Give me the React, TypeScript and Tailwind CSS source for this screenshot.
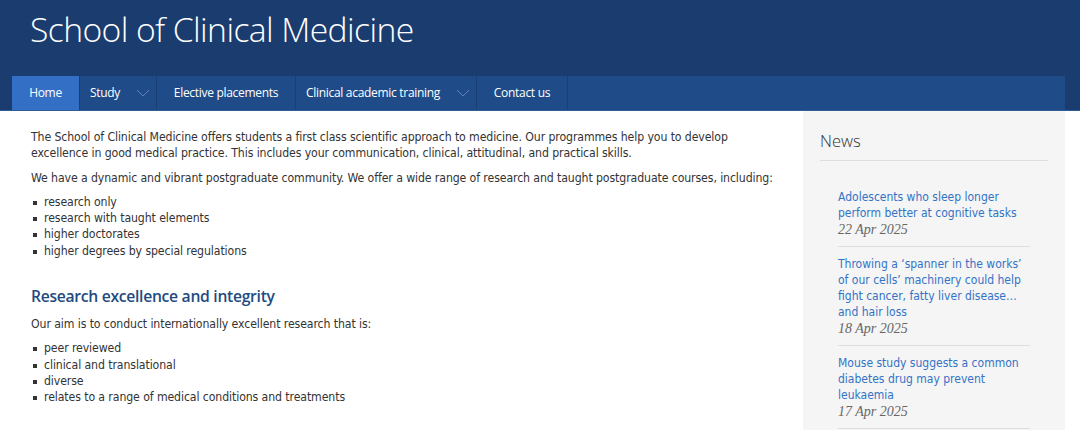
const navItems = [
  { label: "Home", active: true, w: "w-[68px]" },
  { label: "Study", dropdown: true, w: "w-[77px]" },
  { label: "Elective placements", w: "w-[139px]" },
  { label: "Clinical academic training", dropdown: true, w: "w-[181px]" },
  { label: "Contact us", w: "w-[91px]" },
];

const news = [
  { title: "Adolescents who sleep longer perform better at cognitive tasks", date: "22 Apr 2025" },
  {
    title: "Throwing a \u2018spanner in the works\u2019 of our cells\u2019 machinery could help fight cancer, fatty liver disease\u2026 and hair loss",
    date: "18 Apr 2025",
  },
  { title: "Mouse study suggests a common diabetes drug may prevent leukaemia", date: "17 Apr 2025" },
];

const Chevron = () => (
  <svg width="14" height="8" viewBox="0 0 14 8" fill="none" className="shrink-0">
    <polyline points="1,1 7,7 13,1" stroke="#5f82b6" strokeWidth="1" />
  </svg>
);

const Bullets = ({ items }: { items: string[] }) => (
  <ul className="mb-[16px]">
    {items.map((item) => (
      <li key={item} className="flex items-start">
        <span className="mt-[7px] ml-[2px] mr-[7px] h-[4px] w-[4px] shrink-0 bg-[#333]" />
        <span>{item}</span>
      </li>
    ))}
  </ul>
);

export default function App() {
  return (
    <div className="min-h-[430px] bg-white">
      {/* HEADER */}
      <header className="bg-[#1a3c6e] border-b border-[#2e5d94]">
        <div className="pl-[12px] w-[1065px]">
          <h1 className="h-[76px] pl-[18px] pt-[5px] font-['Open_Sans',sans-serif] text-[33.7px] font-light leading-[48px] tracking-[-0.6px] text-white">
            School of Clinical Medicine
          </h1>
          <nav className="flex h-[34px] bg-[#1f4c88]">
            {navItems.map((item) => (
              <div
                key={item.label}
                className={`${item.w} flex items-center border-r border-[#1a3f72] font-['Open_Sans',sans-serif] text-[12px] font-medium tracking-[-0.3px] text-white ${
                  item.active ? "justify-center bg-[#3370c5]" : item.dropdown ? "justify-between pl-[10px] pr-[6px]" : "justify-center"
                }`}
              >
                <span>{item.label}</span>
                {item.dropdown && <Chevron />}
              </div>
            ))}
          </nav>
        </div>
      </header>

      {/* CONTENT */}
      <div className="flex w-[1065px] pl-[12px]">
        <main className="w-[791px] pl-[19px] pr-[23px] pt-[18px] font-['DejaVu_Sans_Condensed','DejaVu_Sans',Verdana,sans-serif] [font-stretch:semi-condensed] text-[12.2px] tracking-[-0.1px] leading-[16.3px] text-[#333]">
          <p className="mb-[8px]">
            The School of Clinical Medicine offers students a first class scientific approach to medicine. Our programmes help you to develop excellence in good medical practice. This includes your communication, clinical, attitudinal, and practical skills.
          </p>
          <p className="mb-[8px]">
            We have a dynamic and vibrant postgraduate community. We offer a wide range of research and taught postgraduate courses, including:
          </p>
          <Bullets items={["research only", "research with taught elements", "higher doctorates", "higher degrees by special regulations"]} />
          <h2 className="mt-[25px] mb-[8px] font-['Open_Sans',sans-serif] [font-stretch:normal] text-[15.7px] font-semibold leading-[24px] tracking-[-0.3px] text-[#1f4b80]">
            Research excellence and integrity
          </h2>
          <p className="mb-[8px]">Our aim is to conduct internationally excellent research that is:</p>
          <Bullets items={["peer reviewed", "clinical and translational", "diverse", "relates to a range of medical conditions and treatments"]} />
        </main>

        <aside className="w-[262px] bg-[#f5f5f5] px-[17px] pt-[18px] pb-[10px]">
          <h3 className="border-b border-[#dedede] pb-[7px] font-['Open_Sans',sans-serif] text-[16.5px] font-light leading-[24px] text-[#333]">
            News
          </h3>
          <ul className="mt-[28px] pl-[18px] pr-[18px]">
            {news.map((n) => (
              <li key={n.date} className="mb-[9px] border-b border-[#dedede] pb-[8px]">
                <a className="block font-['DejaVu_Sans_Condensed','DejaVu_Sans',Verdana,sans-serif] [font-stretch:semi-condensed] text-[12px] leading-[16px] text-[#3373c6]">
                  {n.title}
                </a>
                <span className="block font-['Liberation_Serif',Georgia,serif] text-[14px] italic leading-[17px] text-[#666]">
                  {n.date}
                </span>
              </li>
            ))}
          </ul>
        </aside>
      </div>
    </div>
  );
}
